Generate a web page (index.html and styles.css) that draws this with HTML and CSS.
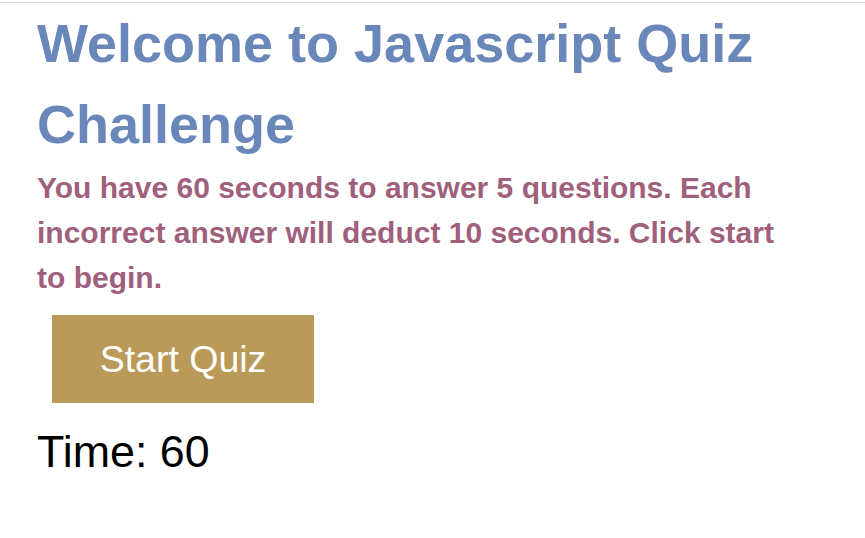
FILE: index.html
```html
<!DOCTYPE html>
<html lang="en">
<head>
<meta charset="utf-8">
<title>Javascript Quiz Challenge</title>
<link rel="stylesheet" href="styles.css">
</head>
<body>
<div class="topline"></div>
<main class="quiz">
  <h1 class="title">Welcome to Javascript Quiz Challenge</h1>
  <p class="intro">You have 60 seconds to answer 5 questions. Each incorrect answer will deduct 10 seconds. Click start to begin.</p>
  <button class="start">Start Quiz</button>
  <div class="timer">Time: <span>60</span></div>
</main>
</body>
</html>
```
FILE: styles.css
```css
html, body {
  margin: 0;
  padding: 0;
  background: #ffffff;
}
body {
  font-family: "Liberation Sans", Arial, sans-serif;
  line-height: 1.5;
}
.topline {
  margin-top: 2px;
  height: 1px;
  background: #d9d9d9;
}
.quiz {
  padding: 0 37px;
  max-width: 750px;
  display: flex;
  flex-direction: column;
  align-items: flex-start;
}
.title {
  margin: 0;
  font-size: 54px;
  font-weight: bold;
  line-height: 81px;
  color: #6a87b9;
}
.intro {
  margin: 0;
  font-size: 30px;
  font-weight: bold;
  line-height: 45px;
  color: #a05f7c;
}
.start {
  margin: 15px 0 0 15px;
  width: 262px;
  height: 88px;
  padding: 0;
  border: none;
  background: #b99a58;
  color: #ffffff;
  font-family: "Liberation Sans", Arial, sans-serif;
  font-size: 37.5px;
  line-height: 54px;
}
.timer {
  margin-top: 15px;
  font-size: 44.8px;
  line-height: 66px;
  color: #000000;
}
```
